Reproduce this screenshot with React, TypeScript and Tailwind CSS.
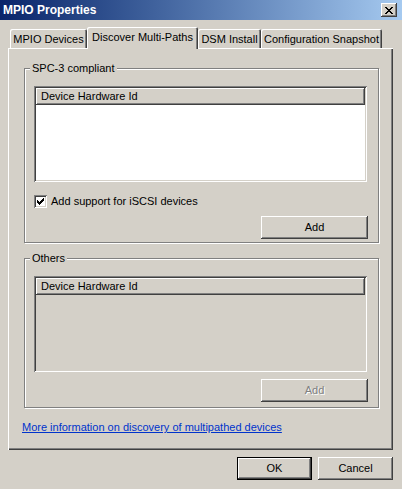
import React from "react";

const raised =
  "shadow-[inset_-1px_-1px_#404040,inset_1px_1px_#ffffff,inset_-2px_-2px_#808080,inset_2px_2px_#d4d0c8]";
const sunken =
  "shadow-[inset_1px_1px_#808080,inset_-1px_-1px_#ffffff,inset_2px_2px_#404040,inset_-2px_-2px_#d4d0c8]";

function Tab({ label, width, selected }: { label: string; width: string; selected?: boolean }) {
  return (
    <div
      className={
        "flex items-center justify-center bg-[#d4d0c8] rounded-t-[2px] shadow-[inset_1px_1px_#ffffff,inset_-1px_0_#404040,inset_-2px_0_#808080] " +
        width +
        (selected ? " h-[22px] -mb-[1px] relative z-10 pb-[2px]" : " h-[19px] pt-[1px]")
      }
    >
      <span className="whitespace-nowrap">{label}</span>
    </div>
  );
}

function Group({ label, height, children }: { label: string; height: string; children: React.ReactNode }) {
  return (
    <div
      className={
        "relative ml-[16px] w-[355px] border border-[#808080] shadow-[inset_1px_1px_#ffffff,1px_1px_#ffffff] " + height
      }
    >
      <div className="absolute left-[5px] -top-[7px] px-[2px] bg-[#d4d0c8] leading-[13px]">{label}</div>
      {children}
    </div>
  );
}

function ListBox({ disabled }: { disabled?: boolean }) {
  return (
    <div className={"ml-[9px] w-[333px] h-[96px] p-[2px] " + sunken + (disabled ? " bg-[#d4d0c8]" : " bg-white")}>
      <div className={"h-[17px] flex items-center pl-[5px] bg-[#d4d0c8] " + raised}>Device Hardware Id</div>
    </div>
  );
}

function Button({
  label,
  width,
  disabled,
  isDefault,
}: {
  label: string;
  width: string;
  disabled?: boolean;
  isDefault?: boolean;
}) {
  if (isDefault) {
    return (
      <div className={"h-[23px] border border-black bg-[#d4d0c8] " + width}>
        <div className={"w-full h-full flex items-center justify-center " + raised}>{label}</div>
      </div>
    );
  }
  return (
    <div
      className={
        "h-[23px] flex items-center justify-center bg-[#d4d0c8] " +
        raised +
        " " +
        width +
        (disabled ? " text-[#808080] [text-shadow:1px_1px_#ffffff]" : "")
      }
    >
      {label}
    </div>
  );
}

export default function App() {
  return (
    <div className="w-[402px] h-[489px] bg-[#d4d0c8] overflow-hidden font-['Liberation_Sans',Arial,sans-serif] text-[11px] leading-[13px] text-black">
      {/* Title bar */}
      <div className="h-[20px] flex items-center justify-between pl-[3px] pr-[5px] bg-linear-to-r from-[#0a246a] to-[#a6caf0]">
        <span className="text-white font-bold text-[12px] leading-[14px]">MPIO Properties</span>
        <div className={"w-[16px] h-[14px] flex items-center justify-center bg-[#d4d0c8] " + raised}>
          <svg width="8" height="7" viewBox="0 0 8 7" shapeRendering="crispEdges">
            <path
              fill="#000"
              d="M0 0h2v1H0z M6 0h2v1H6z M1 1h2v1H1z M5 1h2v1H5z M2 2h4v1H2z M3 3h2v1H3z M2 4h4v1H2z M1 5h2v1H1z M5 5h2v1H5z M0 6h2v1H0z M6 6h2v1H6z"
            />
          </svg>
        </div>
      </div>

      {/* Tabs */}
      <div className="mt-[7px] pl-[10px] flex items-end h-[21px]">
        <Tab label="MPIO Devices" width="w-[77px]" />
        <Tab label="Discover Multi-Paths" width="w-[111px]" selected />
        <Tab label="DSM Install" width="w-[63px]" />
        <Tab label="Configuration Snapshot" width="w-[121px]" />
      </div>

      {/* Tab panel */}
      <div className="ml-[8px] w-[385px] h-[402px] pt-[20px] bg-[#d4d0c8] shadow-[inset_1px_1px_#ffffff,inset_-1px_-1px_#404040,inset_-2px_-2px_#808080]">
        <Group label="SPC-3 compliant" height="h-[175px]">
          <div className="pt-[17px]">
            <ListBox />
            <div className="mt-[13px] ml-[9px] flex items-center gap-[4px]">
              <div className={"w-[13px] h-[13px] bg-white flex items-center justify-center " + sunken}>
                <svg width="7" height="7" viewBox="0 0 7 7" shapeRendering="crispEdges">
                  <path
                    fill="#000"
                    d="M0 2h1v3H0z M1 3h1v3H1z M2 4h1v3H2z M3 3h1v3H3z M4 2h1v3H4z M5 1h1v3H5z M6 0h1v3H6z"
                  />
                </svg>
              </div>
              <span>Add support for iSCSI devices</span>
            </div>
            <div className="mt-[8px] ml-[236px]">
              <Button label="Add" width="w-[107px]" />
            </div>
          </div>
        </Group>

        <div className="h-[15px]" />

        <Group label="Others" height="h-[150px]">
          <div className="pt-[17px]">
            <ListBox disabled />
            <div className="mt-[7px] ml-[236px]">
              <Button label="Add" width="w-[107px]" disabled />
            </div>
          </div>
        </Group>

        <div className="mt-[13px] ml-[14px]">
          <span className="text-[#0033cc] underline">More information on discovery of multipathed devices</span>
        </div>
      </div>

      {/* Bottom buttons */}
      <div className="mt-[7px] pr-[9px] flex justify-end gap-[6px]">
        <Button label="OK" width="w-[75px]" isDefault />
        <Button label="Cancel" width="w-[75px]" />
      </div>
    </div>
  );
}
